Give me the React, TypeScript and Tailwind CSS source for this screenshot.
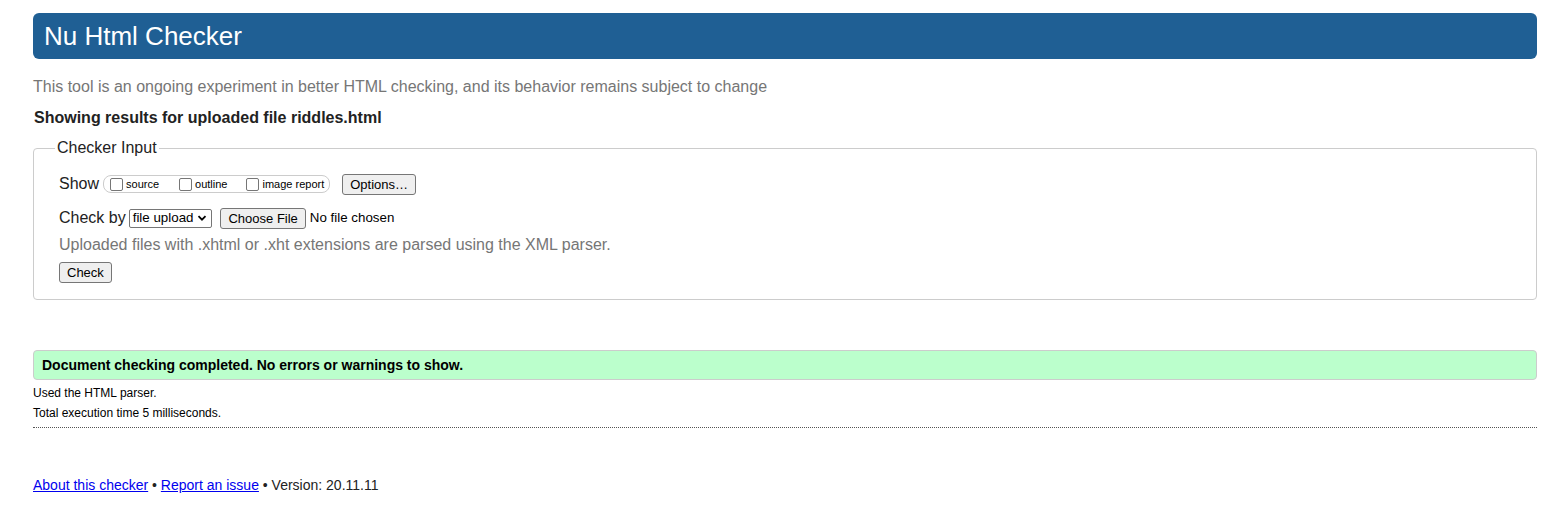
import React from "react";

const font = "font-['Liberation_Sans',Arial,sans-serif]";

function Btn({ children, className = "" }: { children: React.ReactNode; className?: string }) {
  return (
    <button
      className={`h-[21px] px-[7px] bg-[#efefef] border border-[#767676] rounded-[3px] text-[13px] text-black leading-none ${className}`}
    >
      {children}
    </button>
  );
}

function Box({ label }: { label: string }) {
  return (
    <label className="flex items-center">
      <span className="w-[13px] h-[13px] border border-[#767676] rounded-[2px] bg-white mr-[3px]" />
      <span className="text-[11px] text-black">{label}</span>
    </label>
  );
}

export default function App() {
  return (
    <div className={`${font} bg-white min-h-[515px] pl-[33px] pr-[20px] pt-[13px] text-[#222]`}>
      {/* title bar */}
      <div className="h-[46px] bg-[#1f5f94] rounded-[6px] flex items-center pl-[11px]">
        <h1 className="text-[26px] text-white leading-none">Nu Html Checker</h1>
      </div>

      <p className="text-[16px] text-[#767676] mt-[19px] leading-[18px]">
        This tool is an ongoing experiment in better HTML checking, and its behavior remains subject to change
      </p>
      <p className="text-[16px] font-bold text-[#222] mt-[13px] ml-[1px] leading-[18px]">
        Showing results for uploaded file riddles.html
      </p>

      {/* form */}
      <fieldset className="mt-[12px] border border-[#cccccc] rounded-[4px] pl-[25px] pb-[15px]">
        <legend className="text-[16px] text-[#222] px-[2px] ml-[-4px] leading-[18px]">Checker Input</legend>

        <div className="flex items-center mt-[16px] h-[22px]">
          <span className="text-[16px] text-[#222] mr-[4px]">Show</span>
          <div className="flex items-center h-[18px] border border-[#cccccc] rounded-[8px] pl-[6px] pr-[5px]">
            <Box label="source" />
            <span className="w-[20px]" />
            <Box label="outline" />
            <span className="w-[19px]" />
            <Box label="image report" />
          </div>
          <Btn className="ml-[12px]">Options…</Btn>
        </div>

        <div className="flex items-center mt-[13px] h-[20px]">
          <span className="text-[16px] text-[#222] mr-[3px]">Check by</span>
          <span className="flex items-center h-[19px] border border-[#767676] rounded-[2px] pl-[3px] pr-[4px] text-[13.33px] text-black bg-white">
            file upload
            <svg width="10" height="10" viewBox="0 0 10 10" className="ml-[4px]">
              <path d="M1.5 3.2 L5 6.7 L8.5 3.2" stroke="#000" strokeWidth="1.8" fill="none" />
            </svg>
          </span>
          <Btn className="ml-[8px]">Choose File</Btn>
          <span className="text-[13.33px] text-black ml-[4px]">No file chosen</span>
        </div>

        <p className="text-[16px] text-[#767676] mt-[8px] leading-[18px]">
          Uploaded files with .xhtml or .xht extensions are parsed using the XML parser.
        </p>

        <Btn className="mt-[8px]">Check</Btn>
      </fieldset>

      {/* result */}
      <div className="mt-[50px] h-[30px] bg-[#bbffcc] border border-[#cccccc] rounded-[4px] flex items-center pl-[8px]">
        <span className="text-[14px] font-bold text-black">Document checking completed. No errors or warnings to show.</span>
      </div>
      <p className="text-[12px] text-black mt-[6px] leading-[14px]">Used the HTML parser.</p>
      <p className="text-[12px] text-black mt-[6px] leading-[14px]">Total execution time 5 milliseconds.</p>
      <div className="border-b border-dotted border-[#555] mt-[7px]" />

      <p className="text-[14px] text-[#222] mt-[49px] leading-[16px]">
        <a href="#" className="text-[#0000ee] underline">About this checker</a>
        {" • "}
        <a href="#" className="text-[#0000ee] underline">Report an issue</a>
        {" • Version: 20.11.11"}
      </p>
    </div>
  );
}
